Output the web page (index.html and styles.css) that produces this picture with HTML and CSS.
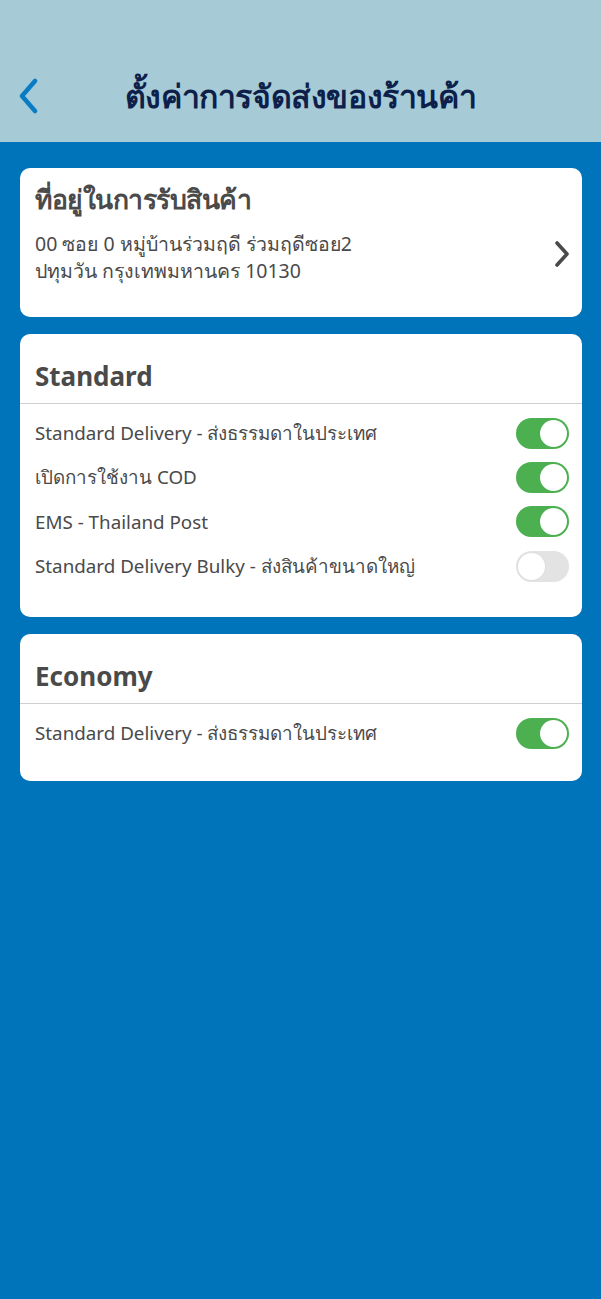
FILE: index.html
```html
<!DOCTYPE html>
<html lang="th">
<head>
<meta charset="utf-8">
<link rel="stylesheet" href="styles.css">
</head>
<body>
<header class="topbar">
  <a class="back" aria-label="back">
    <svg width="22" height="36" viewBox="0 0 22 36"><path d="M18 3 L5 18 L18 33" fill="none" stroke="#0a7cc4" stroke-width="4.5" stroke-linecap="round" stroke-linejoin="round"/></svg>
  </a>
  <h1 class="title">ตั้งค่าการจัดส่งของร้านค้า</h1>
</header>
<main class="content">
  <section class="card address">
    <div class="address-text">
      <h2 class="card-title">ที่อยู่ในการรับสินค้า</h2>
      <p class="address-line">00 ซอย 0 หมู่บ้านร่วมฤดี ร่วมฤดีซอย2</p>
      <p class="address-line">ปทุมวัน กรุงเทพมหานคร 10130</p>
    </div>
    <svg class="chev" width="16" height="26" viewBox="0 0 16 26"><path d="M3 2 L13 13 L3 24" fill="none" stroke="#4a4a4a" stroke-width="3.6" stroke-linecap="round" stroke-linejoin="round"/></svg>
  </section>

  <section class="card group">
    <h2 class="group-title">Standard</h2>
    <div class="rows">
      <div class="row"><span class="label">Standard Delivery - ส่งธรรมดาในประเทศ</span><span class="toggle on"><span class="knob"></span></span></div>
      <div class="row"><span class="label">เปิดการใช้งาน COD</span><span class="toggle on"><span class="knob"></span></span></div>
      <div class="row"><span class="label">EMS - Thailand Post</span><span class="toggle on"><span class="knob"></span></span></div>
      <div class="row"><span class="label">Standard Delivery Bulky - ส่งสินค้าขนาดใหญ่</span><span class="toggle off"><span class="knob"></span></span></div>
    </div>
  </section>

  <section class="card group">
    <h2 class="group-title">Economy</h2>
    <div class="rows rows-short">
      <div class="row"><span class="label">Standard Delivery - ส่งธรรมดาในประเทศ</span><span class="toggle on"><span class="knob"></span></span></div>
    </div>
  </section>
</main>
</body>
</html>
```

FILE: styles.css
```css
* { box-sizing: border-box; }
html, body {
  margin: 0;
  padding: 0;
  background: #0074bb;
  font-family: "Noto Sans", "Open Sans", sans-serif;
  color: #4a4a4a;
}
body { min-height: 1299px; }

.topbar {
  height: 142px;
  background: #a6cbd6;
  display: flex;
  align-items: center;
  padding: 50px 0 0 17px;
}
.back { display: flex; width: 22px; height: 36px; }
.title {
  margin: 0;
  flex: 1;
  text-align: center;
  font-size: 32px;
  font-weight: 700;
  color: #0d1f4a;
  padding-right: 39px;
  letter-spacing: -0.4px;
}

.content {
  padding: 26px 19px 0 20px;
  display: flex;
  flex-direction: column;
  gap: 17px;
}
.card {
  background: #fff;
  border-radius: 10px;
}

.address {
  height: 149px;
  display: flex;
  align-items: flex-start;
  padding: 10px 12px 0 15px;
}
.address-text { flex: 1; }
.card-title {
  margin: 0 0 10px;
  font-size: 26.5px;
  font-weight: 700;
  line-height: 42px;
  color: #4a4a4a;
  letter-spacing: -0.5px;
}
.address-line {
  margin: 0;
  font-size: 19.5px;
  line-height: 27px;
  color: #4a4a4a;
}
.chev { margin-top: 63px; }

.group-title {
  margin: 0;
  height: 70px;
  padding: 23px 0 0 15px;
  font-size: 26px;
  font-weight: 700;
  line-height: 38px;
  color: #4a4a4a;
  border-bottom: 1px solid #cfcfcf;
}
.rows {
  padding: 7px 13px 29px 15px;
}
.rows-short { padding-bottom: 26px; }
.row {
  height: 44.3px;
  display: flex;
  align-items: center;
  justify-content: space-between;
}
.label {
  font-size: 18.8px;
  color: #4a4a4a;
}
.toggle {
  width: 53px;
  height: 31px;
  border-radius: 16px;
  display: flex;
  align-items: center;
  padding: 2px;
}
.toggle.on { background: #4caf50; justify-content: flex-end; }
.toggle.off { background: #e3e3e3; justify-content: flex-start; }
.knob {
  width: 27px;
  height: 27px;
  border-radius: 50%;
  background: #fff;
}
.toggle.off .knob { box-shadow: 0 0 0 1px #dedede; }
```
